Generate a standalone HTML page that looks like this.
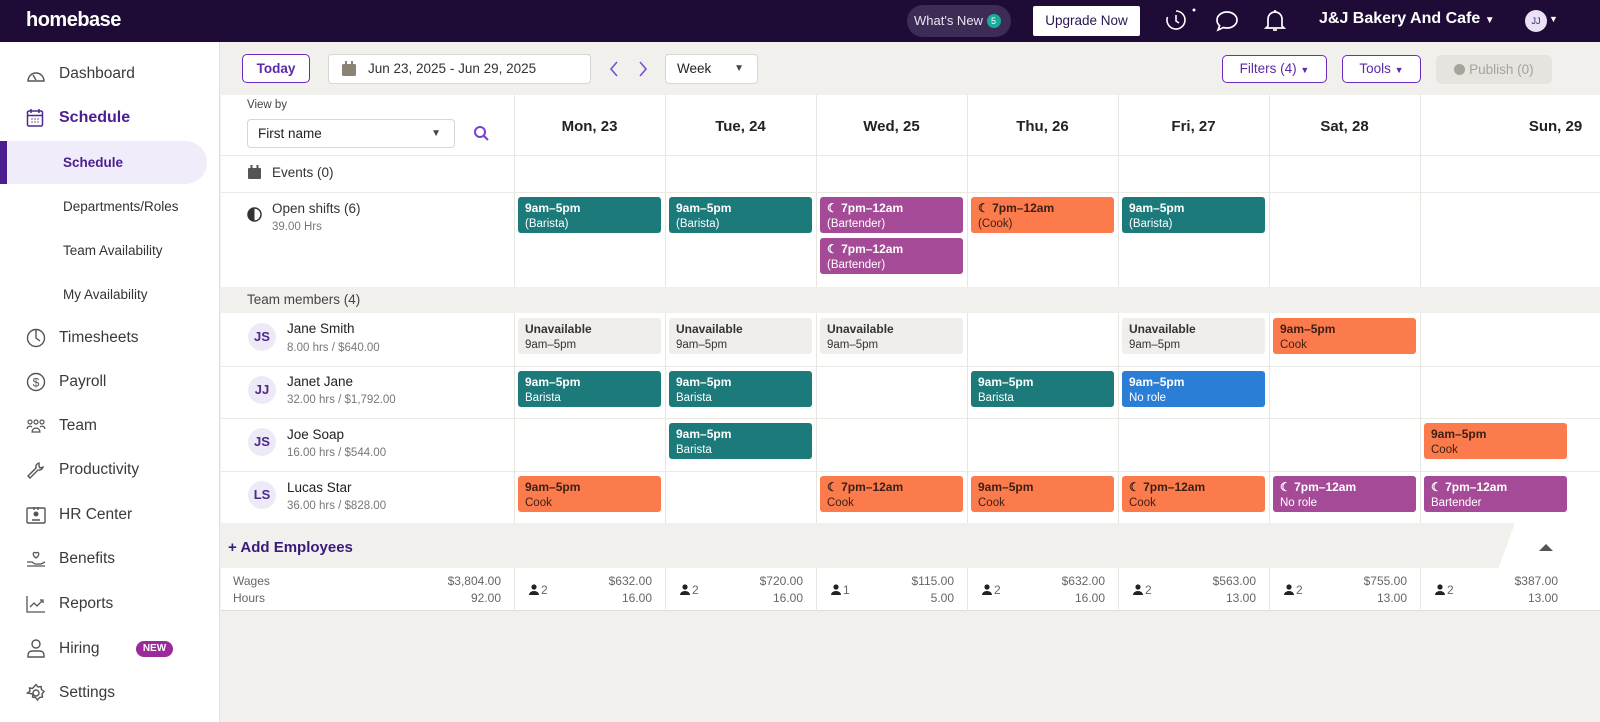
<!DOCTYPE html>
<html><head><meta charset="utf-8"><style>
*{box-sizing:border-box;margin:0;padding:0}
body{width:1600px;height:722px;overflow:hidden;background:#f1f0ed;font-family:"Liberation Sans",sans-serif;color:#222;position:relative}
.a{position:absolute}
.top{left:0;top:0;width:1600px;height:42px;background:#1e0b36}
.side{left:0;top:42px;width:220px;height:680px;background:#fff;border-right:1px solid #e3e1dc}
.nav{position:absolute;left:59px;font-size:15.5px;color:#3a3a3a}
.ico{position:absolute;left:26px}
.sub{position:absolute;left:63px;font-size:13.5px;color:#333}
.btn{position:absolute;border:1.5px solid #6a2bbf;border-radius:5px;background:#fff;color:#5a2aa8;font-size:13.5px;text-align:center}
.cell{position:absolute;border-left:1px solid #e8e6e1}
.card{position:absolute;width:143px;height:36px;border-radius:3px;padding:3px 7px;font-size:11.5px;line-height:16px;color:#fff}
.card b{display:block;font-size:12px}
.t{background:#1c7a7b}.p{background:#a54a97}.o{background:#fc7b4d;color:#3a1f14}.bl{background:#2a7ed6}.u{background:#efeeeb;color:#333}
.hd{position:absolute;top:118px;font-size:15px;font-weight:bold;color:#222;width:151px;text-align:center}
.av{position:absolute;left:248px;width:28px;height:28px;border-radius:50%;background:#eee9f6;color:#4a2a8a;font-size:13px;font-weight:bold;text-align:center;line-height:28px}
.nm{position:absolute;left:287px;font-size:13.5px;color:#222}
.sm{position:absolute;left:287px;font-size:11.5px;color:#777}
.tot{position:absolute;top:573px;font-size:12px;color:#666;line-height:17px}
</style></head><body>
<div class="a top"></div>
<div class="a" style="left:26px;top:9px;color:#fff;font-size:20px;font-weight:bold;letter-spacing:-0.5px">homebase</div>
<div class="a" style="left:907px;top:5px;width:104px;height:32px;border-radius:16px;background:#3d2c55;color:#e8e4f0;font-size:13px;line-height:32px;padding-left:7px">What's New <span style="display:inline-block;width:14px;height:14px;border-radius:7px;background:#1aaa9a;color:#fff;font-size:9px;line-height:14px;text-align:center;vertical-align:1px">5</span></div>
<div class="a" style="left:1033px;top:6px;width:107px;height:30px;background:#fff;border-radius:2px;color:#2a1550;font-size:13.5px;line-height:30px;text-align:center">Upgrade Now</div>
<svg class="a" style="left:1163px;top:8px" width="34" height="26" viewBox="0 0 34 26" fill="none" stroke="#fff" stroke-width="1.6"><path d="M13 3a9 9 0 1 1-8.5 6"/><path d="M13 7v6l3 2"/><circle cx="31" cy="2" r="1.5" fill="#fff" stroke="none"/></svg>
<svg class="a" style="left:1215px;top:10px" width="24" height="22" viewBox="0 0 24 22" fill="none" stroke="#fff" stroke-width="1.7"><path d="M12 2c5.5 0 10 3.6 10 8s-4.5 8-10 8c-1.3 0-2.5-.2-3.6-.5L3 20l1.6-4.3C2.9 14.2 2 12.2 2 10 2 5.6 6.5 2 12 2z"/></svg>
<svg class="a" style="left:1264px;top:8px" width="22" height="26" viewBox="0 0 22 26" fill="none" stroke="#fff" stroke-width="1.7"><path d="M4 18V11a7 7 0 0 1 14 0v7l2 2H2z"/><path d="M9 22h4"/><path d="M11 2v2"/></svg>
<div class="a" style="left:1319px;top:10px;color:#fff;font-size:16px;font-weight:bold">J&amp;J Bakery And Cafe <span style="font-size:10px">▼</span></div>
<div class="a" style="left:1525px;top:10px;width:22px;height:22px;border-radius:11px;background:#e9e2f6;color:#3a1a70;font-size:9px;line-height:22px;text-align:center">JJ</div>
<div class="a" style="left:1549px;top:14px;color:#fff;font-size:9px">▼</div>

<div class="a side"></div>
<div class="a" style="left:0;top:141px;width:207px;height:43px;background:#f1ecfa;border-radius:0 22px 22px 0"></div>
<div class="a" style="left:0;top:141px;width:7px;height:43px;background:#4b1e8f"></div>
<svg class="ico" style="top:66px" width="20" height="18" viewBox="0 0 20 18" fill="none" stroke="#555" stroke-width="1.4"><path d="M2 15a8 8 0 1 1 16 0z"/><path d="M10 14 7 9"/></svg>
<div class="nav" style="top:65px">Dashboard</div>
<svg class="ico" style="top:108px" width="18" height="20" viewBox="0 0 18 20" fill="none" stroke="#4b2a8a" stroke-width="1.5"><rect x="1.5" y="3" width="15" height="15" rx="1.5"/><path d="M1.5 7.5h15M5 1v4M13 1v4"/><path d="M5.5 11h1M8.5 11h1M11.5 11h1M5.5 14h1M8.5 14h1M11.5 14h1"/></svg>
<div class="nav" style="top:109px;color:#4b1e8f;font-weight:bold;font-size:16px">Schedule</div>
<div class="sub" style="top:155px;color:#4b1e8f;font-weight:bold">Schedule</div>
<div class="sub" style="top:199px">Departments/Roles</div>
<div class="sub" style="top:243px">Team Availability</div>
<div class="sub" style="top:287px">My Availability</div>
<svg class="ico" style="top:328px" width="20" height="20" viewBox="0 0 20 20" fill="none" stroke="#555" stroke-width="1.4"><circle cx="10" cy="10" r="8.5"/><path d="M10 1.5V10l4 3"/></svg>
<div class="nav" style="top:329px">Timesheets</div>
<svg class="ico" style="top:372px" width="20" height="20" viewBox="0 0 20 20" fill="none" stroke="#555" stroke-width="1.4"><circle cx="10" cy="10" r="8.5"/><text x="10" y="14.5" font-size="12" text-anchor="middle" fill="#555" stroke="none" font-family="Liberation Sans">$</text></svg>
<div class="nav" style="top:373px">Payroll</div>
<svg class="ico" style="top:418px" width="20" height="16" viewBox="0 0 20 16" fill="none" stroke="#555" stroke-width="1.2"><circle cx="4" cy="4" r="2"/><circle cx="10" cy="4" r="2"/><circle cx="16" cy="4" r="2"/><path d="M1 11a3 3 0 0 1 5-2M19 11a3 3 0 0 0-5-2M6 14a4 4 0 0 1 8 0z"/></svg>
<div class="nav" style="top:417px">Team</div>
<svg class="ico" style="top:461px" width="20" height="20" viewBox="0 0 20 20" fill="none" stroke="#555" stroke-width="1.4"><path d="M13 2a4 4 0 0 0-3 5L2 15l2 2 8-8a4 4 0 0 0 5-3l-3 1-1-2z"/></svg>
<div class="nav" style="top:461px">Productivity</div>
<svg class="ico" style="top:506px" width="20" height="18" viewBox="0 0 20 18" fill="none" stroke="#555" stroke-width="1.4"><rect x="1" y="2" width="18" height="15" rx="1"/><circle cx="10" cy="8" r="1.8" fill="#555"/><path d="M6 14h8M8 1v3M12 1v3"/></svg>
<div class="nav" style="top:506px">HR Center</div>
<svg class="ico" style="top:549px" width="20" height="20" viewBox="0 0 20 20" fill="none" stroke="#555" stroke-width="1.3"><path d="M10 9C6 6 7 3 9 3.5c.5.1 1 .6 1 1 0-.4.5-.9 1-1 2-.5 3 2.5-1 5.5z"/><path d="M1 13h5l3 2h6l4-2M1 17h18"/></svg>
<div class="nav" style="top:550px">Benefits</div>
<svg class="ico" style="top:595px" width="20" height="18" viewBox="0 0 20 18" fill="none" stroke="#555" stroke-width="1.3"><path d="M1 1v16h18"/><path d="M4 12l4-4 3 3 5-5M14 5h3v3"/></svg>
<div class="nav" style="top:595px">Reports</div>
<svg class="ico" style="top:638px" width="20" height="20" viewBox="0 0 20 20" fill="none" stroke="#555" stroke-width="1.4"><circle cx="10" cy="6" r="4"/><path d="M2 19v-2a4 4 0 0 1 4-4h8a4 4 0 0 1 4 4v2z"/></svg>
<div class="nav" style="top:640px">Hiring</div>
<div class="a" style="left:136px;top:641px;width:37px;height:16px;border-radius:8px;background:#9b2a9b;color:#fff;font-size:10px;font-weight:bold;line-height:16px;text-align:center">NEW</div>
<svg class="ico" style="top:683px" width="20" height="20" viewBox="0 0 20 20" fill="none" stroke="#555" stroke-width="1.4"><circle cx="10" cy="10" r="3"/><path d="M10 1.5l2 2.5 3-.5.5 3 2.5 2-2 2.5.5 3-3 .5-2 2.5-2-2.5-3-.5.5-3L1.5 10 4 8l-.5-3 3 .5z"/></svg>
<div class="nav" style="top:684px">Settings</div>

<!-- toolbar -->
<div class="btn" style="left:242px;top:54px;width:68px;height:29px;line-height:27px;font-weight:bold">Today</div>
<div class="a" style="left:328px;top:54px;width:263px;height:30px;background:#fff;border:1px solid #d8d6d1;border-radius:4px;font-size:13.5px;line-height:28px;padding-left:39px;color:#333">Jun 23, 2025 - Jun 29, 2025</div>
<svg class="a" style="left:342px;top:61px" width="14" height="15" viewBox="0 0 14 15"><rect x="0" y="3" width="14" height="12" rx="1.5" fill="#8a8375"/><rect x="3" y="0" width="2" height="4" fill="#8a8375"/><rect x="9" y="0" width="2" height="4" fill="#8a8375"/></svg>
<svg class="a" style="left:606px;top:60px" width="45" height="18" viewBox="0 0 45 18" fill="none" stroke="#7a4fd0" stroke-width="1.6"><path d="M11 2 5 9l6 7M34 2l6 7-6 7"/></svg>
<div class="a" style="left:665px;top:54px;width:93px;height:30px;background:#fff;border:1px solid #d8d6d1;border-radius:4px;font-size:13.5px;line-height:28px;padding-left:11px">Week<span style="position:absolute;right:13px;font-size:10px;color:#444">▼</span></div>
<div class="btn" style="left:1222px;top:55px;width:105px;height:28px;line-height:25px">Filters (4) <span style="font-size:9px">▼</span></div>
<div class="btn" style="left:1342px;top:55px;width:79px;height:28px;line-height:25px">Tools <span style="font-size:9px">▼</span></div>
<div class="a" style="left:1436px;top:55px;width:116px;height:29px;background:#e6e4de;border-radius:5px;color:#a6a39b;font-size:13.5px;line-height:29px;text-align:center"><span style="display:inline-block;width:11px;height:11px;border-radius:6px;background:#a6a39b;vertical-align:-1px"></span> Publish (0)</div>

<!-- grid white areas -->
<div class="a" style="left:221px;top:95px;width:1379px;height:192px;background:#fff"></div>
<div class="a" style="left:221px;top:313px;width:1379px;height:210px;background:#fff"></div>
<div class="a" style="left:221px;top:568px;width:1379px;height:43px;background:#fff;border-bottom:1px solid #ddd"></div>
<div class="a" style="left:221px;top:155px;width:1379px;height:1px;background:#eceae5"></div>
<div class="a" style="left:221px;top:192px;width:1379px;height:1px;background:#eceae5"></div>
<div class="a" style="left:221px;top:366px;width:1379px;height:1px;background:#eceae5"></div>
<div class="a" style="left:221px;top:418px;width:1379px;height:1px;background:#eceae5"></div>
<div class="a" style="left:221px;top:471px;width:1379px;height:1px;background:#eceae5"></div>
<!-- col lines -->
<div class="cell" style="left:514px;top:95px;height:192px"></div><div class="cell" style="left:514px;top:313px;height:210px"></div><div class="cell" style="left:514px;top:568px;height:43px"></div>
<div class="cell" style="left:665px;top:95px;height:192px"></div><div class="cell" style="left:665px;top:313px;height:210px"></div><div class="cell" style="left:665px;top:568px;height:43px"></div>
<div class="cell" style="left:816px;top:95px;height:192px"></div><div class="cell" style="left:816px;top:313px;height:210px"></div><div class="cell" style="left:816px;top:568px;height:43px"></div>
<div class="cell" style="left:967px;top:95px;height:192px"></div><div class="cell" style="left:967px;top:313px;height:210px"></div><div class="cell" style="left:967px;top:568px;height:43px"></div>
<div class="cell" style="left:1118px;top:95px;height:192px"></div><div class="cell" style="left:1118px;top:313px;height:210px"></div><div class="cell" style="left:1118px;top:568px;height:43px"></div>
<div class="cell" style="left:1269px;top:95px;height:192px"></div><div class="cell" style="left:1269px;top:313px;height:210px"></div><div class="cell" style="left:1269px;top:568px;height:43px"></div>
<div class="cell" style="left:1420px;top:95px;height:192px"></div><div class="cell" style="left:1420px;top:313px;height:210px"></div><div class="cell" style="left:1420px;top:568px;height:43px"></div>

<!-- headers -->
<div class="hd" style="left:514px">Mon, 23</div><div class="hd" style="left:665px">Tue, 24</div><div class="hd" style="left:816px">Wed, 25</div><div class="hd" style="left:967px">Thu, 26</div><div class="hd" style="left:1118px">Fri, 27</div><div class="hd" style="left:1269px">Sat, 28</div><div class="hd" style="left:1480px">Sun, 29</div>

<div class="a" style="left:247px;top:99px;font-size:11.5px;color:#444">View by</div>
<div class="a" style="left:247px;top:119px;width:208px;height:29px;border:1px solid #d8d6d1;border-radius:4px;font-size:13.5px;line-height:27px;padding-left:10px">First name<span style="position:absolute;right:13px;font-size:10px;color:#444">▼</span></div>
<svg class="a" style="left:473px;top:125px" width="17" height="17" viewBox="0 0 17 17" fill="none" stroke="#7a3fd0" stroke-width="2"><circle cx="7" cy="7" r="5"/><path d="M11 11l4 4"/></svg>
<svg class="a" style="left:248px;top:165px" width="13" height="14" viewBox="0 0 13 14"><rect x="0" y="3" width="13" height="11" rx="1" fill="#555"/><rect x="2.5" y="0" width="2" height="4" fill="#555"/><rect x="8.5" y="0" width="2" height="4" fill="#555"/></svg>
<div class="a" style="left:272px;top:165px;font-size:13.5px;color:#333">Events (0)</div>
<svg class="a" style="left:247px;top:207px" width="15" height="15" viewBox="0 0 15 15"><circle cx="7.5" cy="7.5" r="6.5" fill="none" stroke="#333" stroke-width="1.5"/><path d="M7.5 1a6.5 6.5 0 0 0 0 13z" fill="#333"/></svg>
<div class="a" style="left:272px;top:201px;font-size:13.5px;color:#333">Open shifts (6)</div>
<div class="a" style="left:272px;top:221px;font-size:11.5px;color:#777">39.00 Hrs</div>
<div class="a" style="left:247px;top:292px;font-size:13.5px;color:#444">Team members (4)</div>

<div class="av" style="top:323px">JS</div><div class="nm" style="top:321px">Jane Smith</div><div class="sm" style="top:342px">8.00 hrs / $640.00</div>
<div class="av" style="top:376px">JJ</div><div class="nm" style="top:374px">Janet Jane</div><div class="sm" style="top:394px">32.00 hrs / $1,792.00</div>
<div class="av" style="top:428px">JS</div><div class="nm" style="top:427px">Joe Soap</div><div class="sm" style="top:447px">16.00 hrs / $544.00</div>
<div class="av" style="top:481px">LS</div><div class="nm" style="top:480px">Lucas Star</div><div class="sm" style="top:500px">36.00 hrs / $828.00</div>

<div class="card t" style="left:518px;top:197px"><b>9am–5pm</b>(Barista)</div>
<div class="card t" style="left:669px;top:197px"><b>9am–5pm</b>(Barista)</div>
<div class="card p" style="left:820px;top:197px"><b>☾ 7pm–12am</b>(Bartender)</div>
<div class="card p" style="left:820px;top:238px"><b>☾ 7pm–12am</b>(Bartender)</div>
<div class="card o" style="left:971px;top:197px"><b>☾ 7pm–12am</b>(Cook)</div>
<div class="card t" style="left:1122px;top:197px"><b>9am–5pm</b>(Barista)</div>
<div class="card u" style="left:518px;top:318px"><b>Unavailable</b>9am–5pm</div>
<div class="card u" style="left:669px;top:318px"><b>Unavailable</b>9am–5pm</div>
<div class="card u" style="left:820px;top:318px"><b>Unavailable</b>9am–5pm</div>
<div class="card u" style="left:1122px;top:318px"><b>Unavailable</b>9am–5pm</div>
<div class="card o" style="left:1273px;top:318px"><b>9am–5pm</b>Cook</div>
<div class="card t" style="left:518px;top:371px"><b>9am–5pm</b>Barista</div>
<div class="card t" style="left:669px;top:371px"><b>9am–5pm</b>Barista</div>
<div class="card t" style="left:971px;top:371px"><b>9am–5pm</b>Barista</div>
<div class="card bl" style="left:1122px;top:371px"><b>9am–5pm</b>No role</div>
<div class="card t" style="left:669px;top:423px"><b>9am–5pm</b>Barista</div>
<div class="card o" style="left:1424px;top:423px"><b>9am–5pm</b>Cook</div>
<div class="card o" style="left:518px;top:476px"><b>9am–5pm</b>Cook</div>
<div class="card o" style="left:820px;top:476px"><b>☾ 7pm–12am</b>Cook</div>
<div class="card o" style="left:971px;top:476px"><b>9am–5pm</b>Cook</div>
<div class="card o" style="left:1122px;top:476px"><b>☾ 7pm–12am</b>Cook</div>
<div class="card p" style="left:1273px;top:476px"><b>☾ 7pm–12am</b>No role</div>
<div class="card p" style="left:1424px;top:476px"><b>☾ 7pm–12am</b>Bartender</div>

<div class="a" style="left:228px;top:539px;font-size:15px;color:#3a1a7a;font-weight:bold">+ Add Employees</div>
<svg class="a" style="left:1498px;top:523px" width="102" height="46" viewBox="0 0 102 46"><path d="M17 0H102V46H0z" fill="#fff"/><path d="M41 28l7-7 7 7z" fill="#555"/></svg>

<div class="tot" style="left:233px">Wages<br>Hours</div>
<div class="tot" style="left:420px;width:81px;text-align:right">$3,804.00<br>92.00</div>
<svg width="0" height="0" style="position:absolute"><defs><g id="pp"><circle cx="5" cy="3" r="2.6" fill="#222"/><path d="M0 11a5 4 0 0 1 10 0z" fill="#222"/></g></defs></svg>
<svg class="a" style="left:529px;top:584px" width="22" height="12"><use href="#pp"/><text x="12" y="10" font-size="12" fill="#666" font-family="Liberation Sans">2</text></svg>
<div class="tot" style="left:580px;width:72px;text-align:right">$632.00<br>16.00</div>
<svg class="a" style="left:680px;top:584px" width="22" height="12"><use href="#pp"/><text x="12" y="10" font-size="12" fill="#666" font-family="Liberation Sans">2</text></svg>
<div class="tot" style="left:731px;width:72px;text-align:right">$720.00<br>16.00</div>
<svg class="a" style="left:831px;top:584px" width="22" height="12"><use href="#pp"/><text x="12" y="10" font-size="12" fill="#666" font-family="Liberation Sans">1</text></svg>
<div class="tot" style="left:882px;width:72px;text-align:right">$115.00<br>5.00</div>
<svg class="a" style="left:982px;top:584px" width="22" height="12"><use href="#pp"/><text x="12" y="10" font-size="12" fill="#666" font-family="Liberation Sans">2</text></svg>
<div class="tot" style="left:1033px;width:72px;text-align:right">$632.00<br>16.00</div>
<svg class="a" style="left:1133px;top:584px" width="22" height="12"><use href="#pp"/><text x="12" y="10" font-size="12" fill="#666" font-family="Liberation Sans">2</text></svg>
<div class="tot" style="left:1184px;width:72px;text-align:right">$563.00<br>13.00</div>
<svg class="a" style="left:1284px;top:584px" width="22" height="12"><use href="#pp"/><text x="12" y="10" font-size="12" fill="#666" font-family="Liberation Sans">2</text></svg>
<div class="tot" style="left:1335px;width:72px;text-align:right">$755.00<br>13.00</div>
<svg class="a" style="left:1435px;top:584px" width="22" height="12"><use href="#pp"/><text x="12" y="10" font-size="12" fill="#666" font-family="Liberation Sans">2</text></svg>
<div class="tot" style="left:1486px;width:72px;text-align:right">$387.00<br>13.00</div>
</body></html>
